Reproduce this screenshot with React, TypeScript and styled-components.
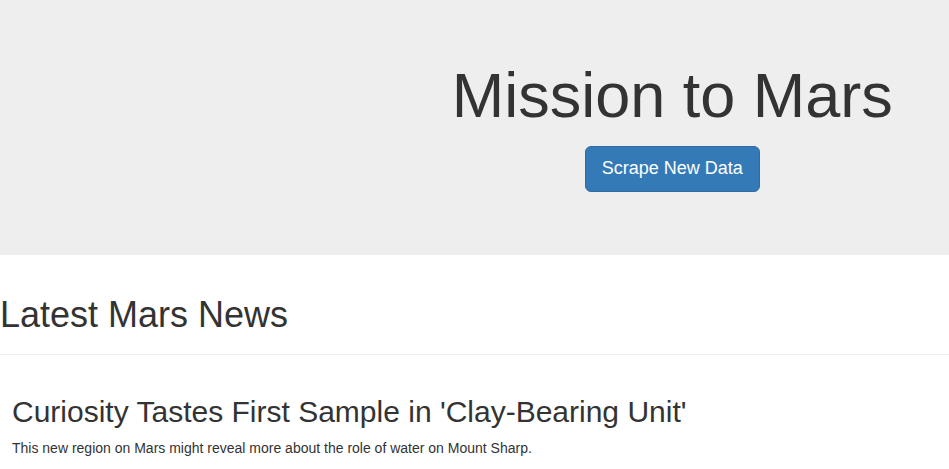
import React from "react";
import styled, { createGlobalStyle } from "styled-components";

const Global = createGlobalStyle`
  html, body { margin: 0; padding: 0; background: #fff; }
  body {
    font-family: "Liberation Sans", Arial, Helvetica, sans-serif;
    font-size: 14px;
    line-height: 1.42857;
    color: #333;
  }
  * { box-sizing: border-box; }
`;

const Jumbotron = styled.header`
  background: #eee;
  padding: 48px 0 63px;
  display: grid;
  grid-template-columns: 5fr 7fr;
`;

const HeroCol = styled.div`
  grid-column: 2;
  display: flex;
  flex-direction: column;
  align-items: center;
  text-align: center;
`;

const Title = styled.h1`
  margin: 13px 0 0;
  font-size: 63px;
  line-height: 1.1;
  font-weight: 500;
  color: #333;
`;

const PrimaryButton = styled.button`
  margin-top: 15.7px;
  font-family: inherit;
  font-size: 18px;
  line-height: 1.3333;
  padding: 10px 16px;
  border-radius: 6px;
  color: #fff;
  background: #337ab7;
  border: 1px solid #2e6da4;
  cursor: pointer;
`;

const PageHeader = styled.div`
  margin-top: 40px;
  padding-bottom: 9px;
  border-bottom: 1px solid #eee;
`;

const SectionTitle = styled.h1`
  margin: 0 0 10px;
  font-size: 36px;
  line-height: 1.1;
  font-weight: 500;
  color: #333;
`;

const NewsItem = styled.article`
  padding: 40px 12px 0;
`;

const NewsTitle = styled.h2`
  margin: 0 0 10px;
  font-size: 30px;
  line-height: 1.1;
  font-weight: 500;
  color: #333;
`;

const NewsTeaser = styled.p`
  margin: 0;
  font-size: 14px;
  line-height: 20px;
  color: #333;
`;

export default function App() {
  return (
    <>
      <Global />
      <Jumbotron>
        <HeroCol>
          <Title>Mission to Mars</Title>
          <PrimaryButton>Scrape New Data</PrimaryButton>
        </HeroCol>
      </Jumbotron>
      <PageHeader>
        <SectionTitle>Latest Mars News</SectionTitle>
      </PageHeader>
      <NewsItem>
        <NewsTitle>Curiosity Tastes First Sample in 'Clay-Bearing Unit'</NewsTitle>
        <NewsTeaser>
          This new region on Mars might reveal more about the role of water on Mount Sharp.
        </NewsTeaser>
      </NewsItem>
    </>
  );
}
